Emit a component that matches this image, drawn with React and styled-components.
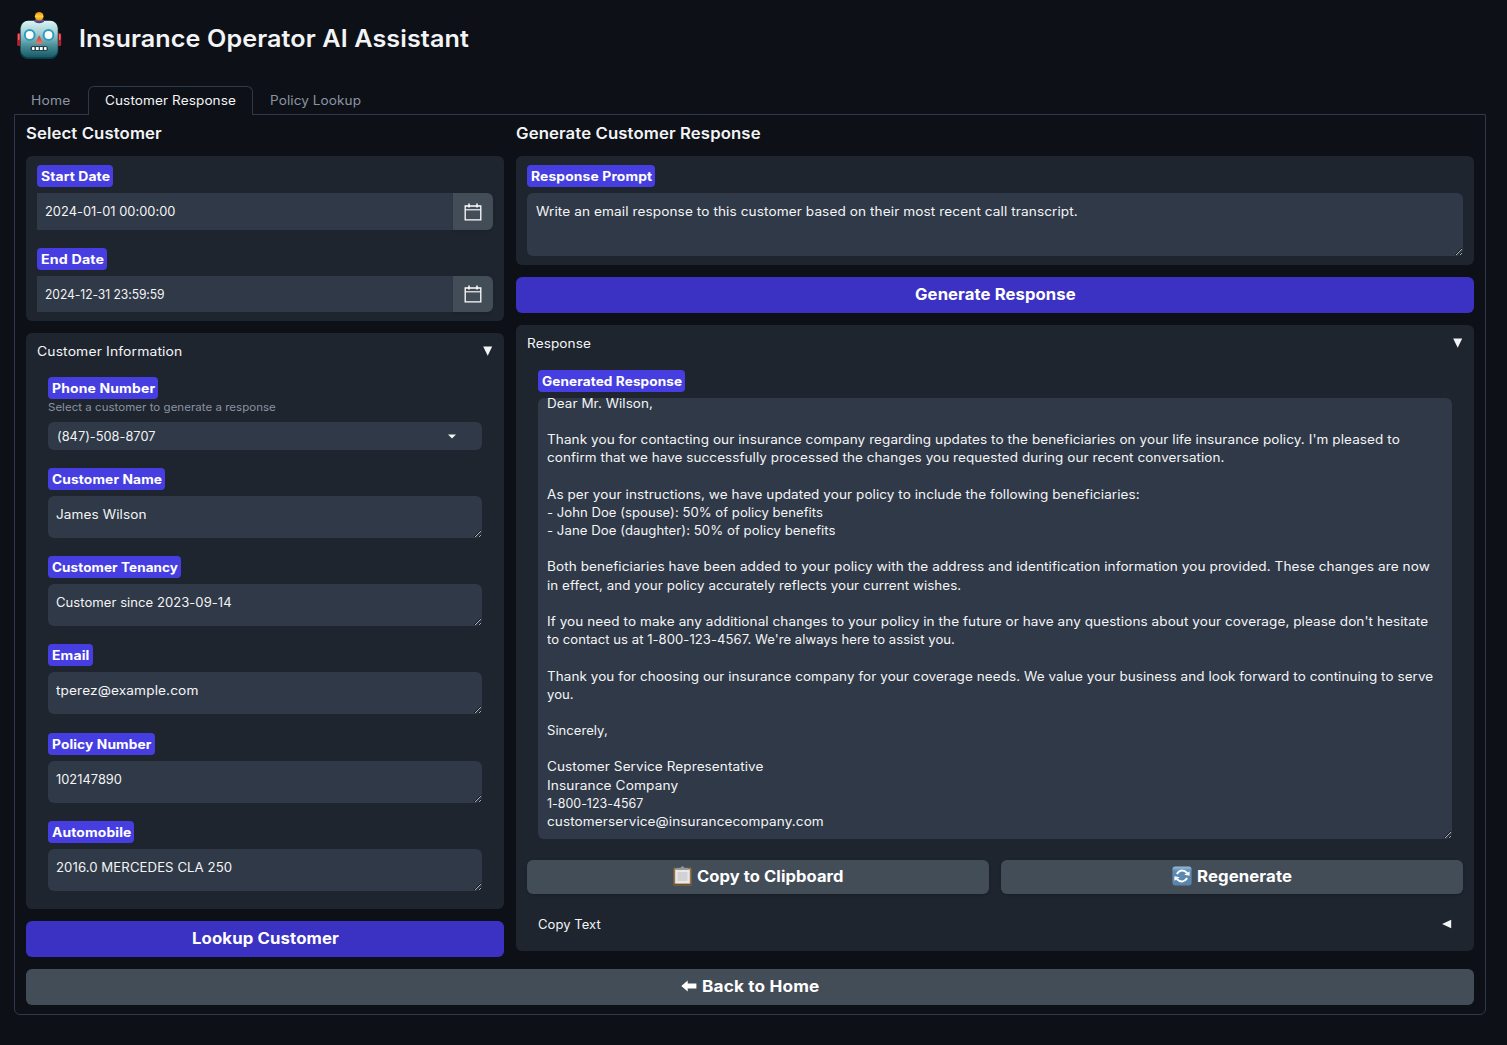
import React, { useLayoutEffect, useRef, useState } from "react";
import styled, { createGlobalStyle, css } from "styled-components";

const color = {
  page: "#0d1117",
  border: "#2f3947",
  card: "#1e252f",
  field: "#303947",
  neutral: "#434d58",
  primary: "#3b31c2",
  label: "#463ee1",
  text: "#f3f4f6",
  muted: "#8b93a1",
};

const GlobalStyle = createGlobalStyle`
  * { box-sizing: border-box; }
  html, body { margin: 0; background: ${color.page}; }
  body {
    color: ${color.text};
    font-family: Inter, "Open Sans", sans-serif;
    font-size: 12.7px;
    line-height: 18.2px;
    overflow: hidden;
  }
  button { font-family: inherit; color: inherit; cursor: pointer; border: 0; }
`;

/* Text whose glyphs are widened, with a little tracking, to span a given width. */
const Run = styled.span`
  display: inline-block;
  text-align: left;
  white-space: pre;
  transform-origin: 0 50%;
`;

function Fit({ w, children }) {
  const ref = useRef(null);
  const [fit, setFit] = useState({ tracking: 0, scale: 1 });
  useLayoutEffect(() => {
    const el = ref.current;
    el.style.letterSpacing = "0px";
    el.style.width = "auto";
    const natural = el.offsetWidth;
    el.style.width = `${w}px`;
    const tracking = (0.15 * (w - natural)) / children.length;
    setFit({ tracking, scale: w / (natural + tracking * children.length) });
  }, [w, children]);
  return (
    <Run
      ref={ref}
      style={{
        width: `${w}px`,
        letterSpacing: `${fit.tracking}px`,
        transform: `scaleX(${fit.scale})`,
      }}
    >
      {children}
    </Run>
  );
}

const Page = styled.div`
  height: 1045px;
  padding: 11px 21px 0 14px;
`;

const Header = styled.header`
  display: flex;
  align-items: flex-start;
  gap: 17px;
  height: 75px;
  padding-left: 3px;
`;

const Title = styled.h1`
  margin: 0;
  font-size: 23.8px;
  font-weight: 600;
  line-height: 32px;
  padding-top: 12px;
`;

const TabBar = styled.nav`
  display: flex;
  height: 29px;
  margin-bottom: -1px;
`;

const Tab = styled.button`
  padding: 0 16px;
  border: 1px solid transparent;
  border-bottom: 0;
  border-radius: 6px 6px 0 0;
  background: transparent;
  color: ${color.muted};
  font-size: 12.7px;
  line-height: 26px;
  ${(p) =>
    p.$active &&
    css`
      background: ${color.page};
      border-color: ${color.border};
      color: ${color.text};
      position: relative;
    `}
`;

const Panel = styled.main`
  height: 901px;
  padding: 8px 11px 0;
  border: 1px solid ${color.border};
  border-radius: 0 0 6px 6px;
`;

const Columns = styled.div`
  display: grid;
  grid-template-columns: 478px 958px;
  gap: 12px;
`;

const Column = styled.section`
  display: flex;
  flex-direction: column;
  gap: 12px;
`;

const Heading = styled.h2`
  height: 21px;
  margin: 0;
  font-size: 15.7px;
  font-weight: 600;
  line-height: 21px;
`;

const Card = styled.div`
  height: ${(p) => p.$h}px;
  padding: 9px 11px;
  border-radius: 6px;
  background: ${color.card};
`;

const Inner = styled.div`
  padding: ${(p) => p.$top}px 11px 0;
`;

const Field = styled.div`
  margin-top: ${(p) => p.$gap || 0}px;
`;

const Label = styled.div`
  width: fit-content;
  height: 22px;
  padding: 0 3.5px;
  margin-bottom: ${(p) => (p.$flush ? 0 : 6)}px;
  border-radius: 4px;
  background: ${color.label};
  color: #fff;
  font-size: 12.7px;
  font-weight: 700;
  line-height: 24px;
`;

const Hint = styled.div`
  height: 23px;
  color: ${color.muted};
  font-size: 10.8px;
  line-height: 18px;
`;

const DateRow = styled.div`
  display: flex;
  height: ${(p) => p.$h}px;
`;

const DateValue = styled.div`
  flex: 1;
  padding-left: 8px;
  background: ${color.field};
  line-height: 37px;
`;

const DateButton = styled.button`
  display: grid;
  place-items: center;
  width: 40px;
  padding: 0;
  border-radius: 0 6px 6px 0;
  background: ${color.neutral};
  box-shadow: 0 1px 3px rgba(0, 0, 0, 0.12);
`;

const Area = styled.div`
  height: ${(p) => p.$h}px;
  padding: 10px ${(p) => p.$x || 8}px;
  border-radius: 6px;
  background: ${color.field};
  overflow: hidden;
  resize: vertical;
`;

const Letter = styled(Area)`
  padding: 0 9px;
  & > div { height: 18.2px; }
  & > div:first-child { margin-top: -3.3px; }
`;

const Select = styled.div`
  display: flex;
  align-items: center;
  justify-content: space-between;
  height: 28px;
  padding: 0 25px 0 9px;
  border-radius: 6px;
  background: ${color.field};
  & > span { margin-top: 2px; }
`;

const AccordionHead = styled.div`
  display: flex;
  align-items: center;
  justify-content: space-between;
  height: 18px;
  & > span { margin-top: 2px; }
`;

const Button = styled.button`
  display: flex;
  align-items: center;
  justify-content: center;
  gap: 5px;
  width: 100%;
  height: ${(p) => p.$h || 36}px;
  padding: 0 0 2px;
  border-radius: 6px;
  background: ${(p) => (p.$primary ? color.primary : color.neutral)};
  color: #fff;
  font-size: 15.7px;
  font-weight: 650;
  box-shadow: ${(p) => (p.$raised ? "0 1px 3px rgba(0, 0, 0, 0.2)" : "none")};
`;

const Actions = styled.div`
  display: grid;
  grid-template-columns: 1fr 1fr;
  gap: 12px;
  margin: 21px 0;
`;

const Footer = styled.div`
  margin-top: 12px;
`;

function Robot() {
  return (
    <svg width="45" height="48" viewBox="0 0 45 48">
      <defs>
        <linearGradient id="face" x1="0" y1="0" x2="0" y2="1">
          <stop offset="0" stopColor="#d9f5f5" />
          <stop offset=".35" stopColor="#a2cdcf" />
          <stop offset=".68" stopColor="#4a8f98" />
          <stop offset="1" stopColor="#155a66" />
        </linearGradient>
        <linearGradient id="bulb" x1="0" y1="0" x2="0" y2="1">
          <stop offset="0" stopColor="#f58a08" />
          <stop offset=".5" stopColor="#ffd43c" />
          <stop offset="1" stopColor="#ed8a08" />
        </linearGradient>
        <linearGradient id="nose" x1="0" y1="0" x2="0" y2="1">
          <stop offset="0" stopColor="#b93e42" />
          <stop offset="1" stopColor="#ef7468" />
        </linearGradient>
      </defs>
      <rect x="0.2" y="22" width="5" height="13" rx="1.5" fill="#b91f2a" />
      <rect x="39.2" y="22" width="5" height="13" rx="1.5" fill="#b91f2a" />
      <rect x="1" y="23" width="1.5" height="6" rx=".7" fill="#f0656a" />
      <rect x="42" y="23" width="1.5" height="6" rx=".7" fill="#f0656a" />
      <rect x="3" y="10" width="38.4" height="38" rx="8" fill="#0e3e48" />
      <rect x="3.7" y="9.8" width="37" height="36.5" rx="7.5" fill="url(#face)" />
      <path d="M17 9.5c2-2 8.400-2 10.400 0c-.5 3.600-9.900 3.600-10.400 0z" fill="#4b3e78" />
      <path d="M18 8.500h8.500v2h-8.500z" fill="#685394" />
      <circle cx="22.200" cy="5.300" r="4.300" fill="url(#bulb)" />
      <g fill="#fff" stroke="#2a9cc4" strokeWidth="2">
        <circle cx="12.700" cy="24" r="4.900" />
        <circle cx="31.500" cy="24" r="4.900" />
      </g>
      <path d="M22.200 24.500L26 31.500q.3 1-1 1h-5.700q-1.300 0-1-1z" fill="url(#nose)" />
      <rect x="13.600" y="35" width="17.400" height="5" rx="2.500" fill="#263f49" />
      <g fill="#fff">
        <rect x="15" y="36" width="2.600" height="3" rx=".8" />
        <rect x="18.900" y="36" width="2.800" height="3" rx=".5" />
        <rect x="22.900" y="36" width="2.800" height="3" rx=".5" />
        <rect x="27" y="36" width="2.600" height="3" rx=".8" />
      </g>
    </svg>
  );
}

function Calendar() {
  return (
    <svg width="18" height="18" viewBox="0 0 18 18" fill="none" stroke="#fff">
      <path d="M1.200 3h15.600v13.800H1.200z" strokeWidth="1.300" />
      <path d="M1.200 6.800h15.600" strokeWidth="1.100" />
      <path d="M5 .5v4M13 .5v4" strokeWidth="1.500" />
    </svg>
  );
}

function Triangle({ left }) {
  return (
    <svg width="10" height="10" viewBox="0 0 10 10" fill={color.text}>
      <path d={left ? "M9.200 .7v8.600L.1 5z" : "M.2 .5h9L4.700 9.700z"} />
    </svg>
  );
}

function Caret() {
  return (
    <svg width="10" height="5" viewBox="0 0 10 5" fill={color.text}>
      <path d="M1 .5h8L5 4.500z" />
    </svg>
  );
}

function Clipboard() {
  return (
    <svg width="19" height="20" viewBox="0 0 19 20">
      <rect x=".6" y="1.800" width="17.800" height="17.800" rx="1.200" fill="#9a7342" />
      <rect x="2.200" y="3.500" width="14.600" height="14.200" fill="#e8e8e8" />
      <rect x="4.500" y="6" width="10" height="9" rx="1" fill="#d2d2d4" />
      <path d="M1 18.500h17" stroke="#735024" strokeWidth="1.400" />
      <path d="M4 2h3.500Q8 .2 9.500 .2T11.500 2H15v2H4z" fill="#92979f" />
    </svg>
  );
}

function Refresh() {
  return (
    <svg width="20" height="20" viewBox="0 0 20 20">
      <defs>
        <linearGradient id="tile" x1="0" y1="0" x2="0" y2="1">
          <stop offset="0" stopColor="#9bbfdb" />
          <stop offset=".25" stopColor="#5b8ab5" />
          <stop offset="1" stopColor="#5c83a8" />
        </linearGradient>
      </defs>
      <rect x=".4" y=".4" width="19.200" height="19.200" rx="3" fill="url(#tile)" />
      <g fill="none" stroke="#fff" strokeWidth="2">
        <path d="M4.800 7.800Q9.500 1.500 15.300 7" />
        <path d="M15.200 12.200Q10.500 18.500 4.700 13" />
      </g>
      <path d="M12.200 8.700L17.600 9.700V5.200zM7.800 11.300L2.400 10.300v4.500z" fill="#fff" />
    </svg>
  );
}

function BackArrow() {
  return (
    <svg width="16" height="12" viewBox="0 0 16 12" fill="#fff">
      <path d="M.3 6L6.700 .4V3.600h8.700v4.800H6.700v3.200z" />
    </svg>
  );
}

const details = [
  ["Customer Name", 110, "James Wilson", 91],
  ["Customer Tenancy", 126, "Customer since 2023-09-14", 176],
  ["Email", 38, "tperez@example.com", 143],
  ["Policy Number", 100, "102147890", 66, 19],
  ["Automobile", 79, "2016.0 MERCEDES CLA 250", 176],
];

const letter = [
  ["Dear Mr. Wilson,", 106],
  null,
  ["Thank you for contacting our insurance company regarding updates to the beneficiaries on your life insurance policy. I'm pleased to", 853],
  ["confirm that we have successfully processed the changes you requested during our recent conversation.", 678],
  null,
  ["As per your instructions, we have updated your policy to include the following beneficiaries:", 593],
  ["- John Doe (spouse): 50% of policy benefits", 276],
  ["- Jane Doe (daughter): 50% of policy benefits", 289],
  null,
  ["Both beneficiaries have been added to your policy with the address and identification information you provided. These changes are now", 883],
  ["in effect, and your policy accurately reflects your current wishes.", 414],
  null,
  ["If you need to make any additional changes to your policy in the future or have any questions about your coverage, please don't hesitate", 881],
  ["to contact us at 1-800-123-4567. We're always here to assist you.", 408],
  null,
  ["Thank you for choosing our insurance company for your coverage needs. We value your business and look forward to continuing to serve", 886],
  ["you.", 27],
  null,
  ["Sincerely,", 61],
  null,
  ["Customer Service Representative", 216],
  ["Insurance Company", 131],
  ["1-800-123-4567", 96],
  ["customerservice@insurancecompany.com", 277],
];

export default function App() {
  return (
    <Page>
      <GlobalStyle />
      <Header>
        <Robot />
        <Title><Fit w={390}>Insurance Operator AI Assistant</Fit></Title>
      </Header>
      <TabBar>
        <Tab><Fit w={40}>Home</Fit></Tab>
        <Tab $active><Fit w={131}>Customer Response</Fit></Tab>
        <Tab><Fit w={91}>Policy Lookup</Fit></Tab>
      </TabBar>
      <Panel>
        <Columns>
          <Column>
            <Heading><Fit w={136}>Select Customer</Fit></Heading>
            <Card $h={165}>
              <Field>
                <Label><Fit w={69}>Start Date</Fit></Label>
                <DateRow $h={37}>
                  <DateValue><Fit w={130}>2024-01-01 00:00:00</Fit></DateValue>
                  <DateButton><Calendar /></DateButton>
                </DateRow>
              </Field>
              <Field $gap={18}>
                <Label><Fit w={63}>End Date</Fit></Label>
                <DateRow $h={36}>
                  <DateValue><Fit w={120}>2024-12-31 23:59:59</Fit></DateValue>
                  <DateButton><Calendar /></DateButton>
                </DateRow>
              </Field>
            </Card>
            <Card $h={576}>
              <AccordionHead>
                <Fit w={145}>Customer Information</Fit>
                <Triangle />
              </AccordionHead>
              <Inner $top={17}>
                <Field>
                  <Label $flush><Fit w={103}>Phone Number</Fit></Label>
                  <Hint><Fit w={228}>Select a customer to generate a response</Fit></Hint>
                  <Select>
                    <Fit w={99}>(847)-508-8707</Fit>
                    <Caret />
                  </Select>
                </Field>
                {details.map(([label, lw, value, vw, gap = 18]) => (
                  <Field key={label} $gap={gap}>
                    <Label><Fit w={lw}>{label}</Fit></Label>
                    <Area $h={42}><Fit w={vw}>{value}</Fit></Area>
                  </Field>
                ))}
              </Inner>
            </Card>
            <Button $primary><Fit w={147}>Lookup Customer</Fit></Button>
          </Column>
          <Column>
            <Heading><Fit w={245}>Generate Customer Response</Fit></Heading>
            <Card $h={109}>
              <Label><Fit w={121}>Response Prompt</Fit></Label>
              <Area $h={63} $x={9}>
                <Fit w={542}>Write an email response to this customer based on their most recent call transcript.</Fit>
              </Area>
            </Card>
            <Button $primary><Fit w={161}>Generate Response</Fit></Button>
            <Card $h={626}>
              <AccordionHead>
                <Fit w={64}>Response</Fit>
                <Triangle />
              </AccordionHead>
              <Inner $top={18}>
                <Label><Fit w={140}>Generated Response</Fit></Label>
                <Letter $h={441}>
                  {letter.map((line, i) => (
                    <div key={i}>{line && <Fit w={line[1]}>{line[0]}</Fit>}</div>
                  ))}
                </Letter>
              </Inner>
              <Actions>
                <Button $h={34} $raised><Clipboard /><Fit w={147}>Copy to Clipboard</Fit></Button>
                <Button $h={34} $raised><Refresh /><Fit w={95}>Regenerate</Fit></Button>
              </Actions>
              <Inner $top={0}>
                <AccordionHead>
                  <Fit w={63}>Copy Text</Fit>
                  <Triangle left />
                </AccordionHead>
              </Inner>
            </Card>
          </Column>
        </Columns>
        <Footer>
          <Button><BackArrow /><Fit w={117}>Back to Home</Fit></Button>
        </Footer>
      </Panel>
    </Page>
  );
}
